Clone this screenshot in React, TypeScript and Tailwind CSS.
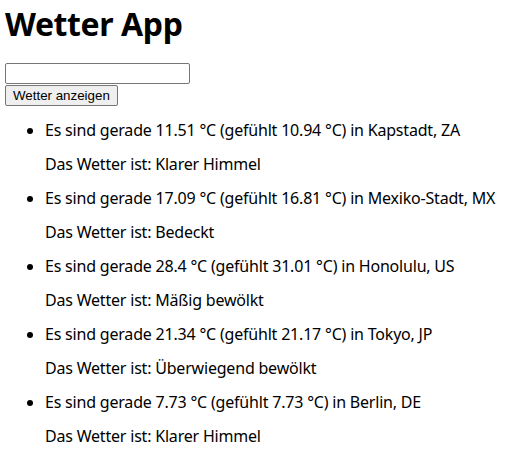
const reports = [
  { temp: '11.51', feels: '10.94', city: 'Kapstadt, ZA', desc: 'Klarer Himmel' },
  { temp: '17.09', feels: '16.81', city: 'Mexiko-Stadt, MX', desc: 'Bedeckt' },
  { temp: '28.4', feels: '31.01', city: 'Honolulu, US', desc: 'Mäßig bewölkt' },
  { temp: '21.34', feels: '21.17', city: 'Tokyo, JP', desc: 'Überwiegend bewölkt' },
  { temp: '7.73', feels: '7.73', city: 'Berlin, DE', desc: 'Klarer Himmel' },
];

export default function App() {
  return (
    <div className="px-[5px] pt-[5px] text-black font-['Noto_Sans',sans-serif] text-[16px] tracking-[-0.2px]">
      <h1 className="text-[32px] font-bold leading-[37px] mb-[21px] tracking-[-0.4px]">Wetter App</h1>
      <input
        type="text"
        className="block w-[185px] h-[21px] border border-[#767676] rounded-[2px] bg-white px-[2px] text-[13px] font-['Liberation_Sans',sans-serif]"
      />
      <button className="block h-[21px] mt-px px-[7px] bg-[#efefef] border border-[#767676] rounded-[2px] text-[13.33px] leading-[17px] tracking-normal text-black font-['Liberation_Sans',sans-serif]">
        Wetter anzeigen
      </button>
      <ul className="list-disc pl-[40px] mt-[7px]">
        {reports.map((r) => (
          <li key={r.city}>
            <div className="leading-[34px]">
              Es sind gerade {r.temp} °C (gefühlt {r.feels} °C) in {r.city}
            </div>
            <div className="leading-[34px]">Das Wetter ist: {r.desc}</div>
          </li>
        ))}
      </ul>
    </div>
  );
}
